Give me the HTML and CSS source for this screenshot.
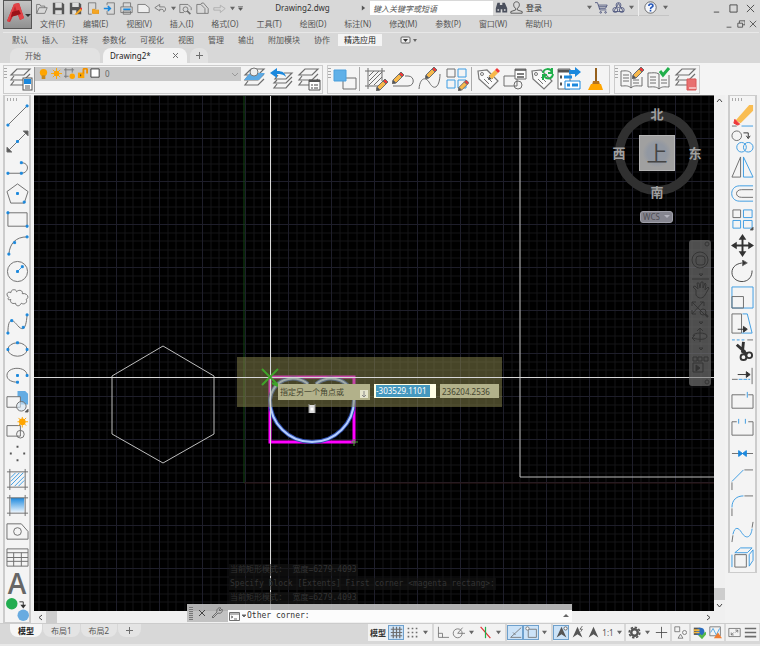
FILE: index.html
```html
<!DOCTYPE html>
<html lang="zh-CN">
<head>
    <meta charset="UTF-8">
    <meta name="viewport" content="width=device-width, initial-scale=1.0">
    <title>Drawing2.dwg</title>
    <link rel="stylesheet" href="styles.css">
</head>
<body>
    <!-- Shared icon parts -->
    <svg class="defs" width="0" height="0">
        <symbol id="caret" viewBox="0 0 6 6"><path d="M0 1h6L3 5z" fill="#666"/></symbol>
        <symbol id="layers" viewBox="0 0 24 24"><path d="M8 2h13l-6 6H2zM5 9l-3 4h13l6-6M5 14l-3 4h13l6-6" fill="none" stroke="#6e6e6e" stroke-width="1.2"/></symbol>
        <symbol id="pencil" viewBox="0 0 12 12"><path d="M0 12l1-4 3 3z" fill="#555"/><path d="M1 8l6-6 3 3-6 6z" fill="#f7b84b"/><path d="M7 2l2-2 3 3-2 2z" fill="#f03838"/></symbol>
        <symbol id="tag" viewBox="0 0 24 24"><path d="M2 4l9-1 11 11-8 8L3 12z" fill="#fafafa" stroke="#777" stroke-width="1.2"/><circle cx="6" cy="7" r="1.5" fill="none" stroke="#777"/><path d="M8 12l5 5M11 10l5 5M13 8l4 4" stroke="#777"/></symbol>
        <symbol id="compass" viewBox="0 0 16 16"><path d="M8 1l6 13-6-4-6 4z" fill="#555"/></symbol>
    </svg>

    <header class="top">
        <button class="app-button" aria-label="应用程序菜单">
            <svg width="28" height="28" viewBox="0 0 28 28"><path d="M3 20L10 3l5-1 5 15-4 2-2-5-5 1-3 6z" fill="#c8262c"/><path d="M10 3l5-1 5 15-4 2-5-14-6 16-2-1z" fill="#e14347"/><path d="M8 11l7-2 2 4-10 3z" fill="#9c1319"/><path d="M21 13h6l-3 3z" fill="#333"/></svg>
        </button>
        <div class="top-rows">
            <div class="title-bar">
                <div class="quick">
                    <button aria-label="打开"><svg viewBox="0 0 16 16" class="i"><path d="M2 14V3h4l1 2h5v2M2 14l3-7h10l-3 7z"/></svg></button>
                    <button aria-label="保存"><svg viewBox="0 0 16 16"><path d="M1 1h12l2 2v12H1z" fill="#555"/><path d="M4 1h8v6H4zM4 10h8v5H4z" fill="#ddd"/></svg></button>
                    <button aria-label="另存为"><svg viewBox="0 0 16 16"><path d="M1 1h12l2 2v12H1z" fill="#555"/><path d="M4 1h8v5H4zM4 10h5v5H4z" fill="#ddd"/><path d="M7 15l7-7 2 2-7 6z" fill="#f5a623"/><path d="M13 7l3 3V7z" fill="#e33"/></svg></button>
                    <button aria-label="从移动设备打开"><svg viewBox="0 0 16 16" class="i"><path d="M3 15V1h9v8M3 15h4"/><path d="M8 14V9h3l1 1h4v4z" fill="#f5a623" stroke="#e69512"/></svg></button>
                    <button aria-label="保存到移动设备"><svg viewBox="0 0 16 16" class="i"><path d="M5 4V1h9v14H5v-4"/><path d="M1 8h7M6 5l3 3-3 3" stroke="#1b88dd" stroke-width="2"/></svg></button>
                    <button aria-label="打印"><svg viewBox="0 0 16 16" class="i"><path d="M4 6V1h9v5M1 6h14v7H1zM4 11h9v4H4z"/><path d="M4 9h9" stroke="#1b88dd" stroke-width="2"/></svg></button>
                    <button aria-label="新建"><svg viewBox="0 0 16 16" class="i"><path d="M1 3h9l5 4v6H1z" fill="#eee"/></svg></button>
                    <button aria-label="放弃"><svg viewBox="0 0 16 16" class="i"><path d="M1 7l6-4v3h5c3 0 3 5 0 6 0-3-1-3-5-3v2z"/></svg></button>
                    <button class="slim" aria-label="放弃列表"><svg viewBox="0 0 6 6"><use href="#caret"/></svg></button>
                    <button aria-label="打印预览"><svg viewBox="0 0 16 16" class="i"><path d="M6 13H1V3h10l4 4v3"/><circle cx="8" cy="9" r="3"/><path d="M10 11l4 4" stroke-width="2"/></svg></button>
                    <button aria-label="发布"><svg viewBox="0 0 16 16" class="i"><path d="M1 14V3h5l5 5v6zM6 2l3-1 6 7v6h-4"/></svg></button>
                    <button aria-label="重做"><svg viewBox="0 0 16 16" class="i faint"><path d="M15 8L9 4v3H1v3h8v3z"/></svg></button>
                    <button class="slim" aria-label="重做列表"><svg viewBox="0 0 6 6"><use href="#caret"/></svg></button>
                    <button class="slim" aria-label="自定义"><svg viewBox="0 0 8 8"><path d="M0 1h8M1 3h6L4 7z" fill="#555" stroke="#555"/></svg></button>
                </div>
                <h1 class="doc-title">Drawing2.dwg</h1>
                <div class="search">
                    <svg class="car" viewBox="0 0 6 6"><path d="M1 0l4 3-4 3z" fill="#555"/></svg>
                    <input type="search" aria-label="搜索" placeholder="键入关键字或短语">
                </div>
                <div class="account">
                    <button aria-label="搜索"><svg viewBox="0 0 16 16" fill="#4a4f5c"><path d="M3 2h3v3h3V2h3l3 7v5H9v-4H7v4H1V9z"/><path d="M3 10h2v2H3zM11 10h2v2h-2z" fill="#ddd"/></svg></button>
                    <button class="sign-in"><svg viewBox="0 0 16 16" class="i w"><path d="M8 1c5 0 4 7 1 8v2l6 2v2H1v-2l6-2V9C4 8 3 1 8 1z"/></svg>登录</button>
                    <button class="slim" aria-label="帐户"><svg viewBox="0 0 6 6"><use href="#caret"/></svg></button>
                    <button aria-label="商店"><svg viewBox="0 0 16 16" class="i navy"><path d="M0 2h3l3 9h8M4 5h11l-2 4H5M5 7h9"/><circle cx="7" cy="14" r="1"/><circle cx="13" cy="14" r="1"/></svg></button>
                    <button aria-label="应用"><svg viewBox="0 0 16 16" class="i navy"><circle cx="8" cy="5" r="3"/><circle cx="4" cy="11" r="3"/><circle cx="12" cy="11" r="3"/><path d="M8 3L2 13h12z"/></svg></button>
                    <button class="slim" aria-label="应用列表"><svg viewBox="0 0 6 6"><use href="#caret"/></svg></button>
                    <button class="help" aria-label="帮助"><svg viewBox="0 0 16 16"><circle cx="8" cy="8" r="7" fill="#f4f6fb" stroke="#555"/><path d="M6 6c0-3 5-3 5 0 0 2-3 1-3 4M8 11v2" fill="none" stroke="#2456b8" stroke-width="2"/></svg></button>
                    <button class="slim" aria-label="帮助列表"><svg viewBox="0 0 6 6"><use href="#caret"/></svg></button>
                </div>
                <div class="window-buttons">
                    <button aria-label="最小化"><svg viewBox="0 0 10 10" class="i w"><path d="M2 9h6"/></svg></button>
                    <button aria-label="最大化"><svg viewBox="0 0 10 10" class="i w"><path d="M1 1h8v8H1z"/></svg></button>
                    <button aria-label="关闭"><svg viewBox="0 0 10 10" class="i w"><path d="M1 1l8 8M9 1L1 9"/></svg></button>
                </div>
            </div>
            <div class="menu-row">
                <nav class="menus">
                    <button>文件(F)</button><button>编辑(E)</button><button>视图(V)</button><button>插入(I)</button><button>格式(O)</button><button>工具(T)</button><button>绘图(D)</button><button>标注(N)</button><button>修改(M)</button><button>参数(P)</button><button>窗口(W)</button><button>帮助(H)</button>
                </nav>
                <div class="doc-buttons">
                    <button aria-label="最小化图形"><svg viewBox="0 0 10 10" class="i w"><path d="M2 9h6"/></svg></button>
                    <button aria-label="还原图形"><svg viewBox="0 0 10 10" class="i w"><path d="M3 4V1h7v5H7M1 4h6v5H1z"/></svg></button>
                    <button aria-label="关闭图形"><svg viewBox="0 0 10 10" class="i w"><path d="M1 1l8 8M9 1L1 9"/></svg></button>
                </div>
            </div>
        </div>
    </header>

    <nav class="ribbon">
        <button>默认</button><button>插入</button><button>注释</button><button>参数化</button><button>可视化</button><button>视图</button><button>管理</button><button>输出</button><button>附加模块</button><button>协作</button><button class="active">精选应用</button>
        <button class="ribbon-more" aria-label="最小化功能区"><svg width="18" height="8" viewBox="0 0 18 8"><rect x="1" y="1" width="9" height="6" rx="1" fill="#eee" stroke="#666"/><path d="M3 3h5L5.500 6z" fill="#333"/><path d="M13 3h4l-2 3z" fill="#666"/></svg></button>
    </nav>

    <div class="doc-tabs">
        <button class="doc-tab start">开始</button>
        <button class="doc-tab active"><span>Drawing2*</span><svg width="7" height="7" viewBox="0 0 7 7" class="i"><path d="M1 1l5 5M6 1L1 6"/></svg></button>
        <button class="doc-tab new" aria-label="新图形"><svg width="7" height="7" viewBox="0 0 7 7" class="i"><path d="M0 3.500h7M3.500 0v7"/></svg></button>
    </div>

    <div class="toolbars">
        <div class="toolbar">
            <span class="grip"></span>
            <button aria-label="图层特性"><svg viewBox="0 0 24 24"><use href="#layers"/><rect x="14" y="11" width="9" height="12" fill="#fff" stroke="#555"/><path d="M15 12h7v5h-7z" fill="#1b88dd"/><path d="M16 19h5M16 21h5" stroke="#555"/></svg></button>
            <div class="layer-box">
                <div class="layer-combo">
                    <svg width="11" height="11" viewBox="0 0 12 12"><circle cx="6" cy="5" r="4" fill="#ffa500"/><path d="M4 8h4v4H4z" fill="#c98a1c"/></svg>
                    <svg width="11" height="11" viewBox="0 0 12 12"><circle cx="6" cy="6" r="3" fill="#ffa500"/><path d="M6 0v12M0 6h12M2 2l8 8M10 2l-8 8" stroke="#ffa500"/></svg>
                    <svg width="11" height="11" viewBox="0 0 12 12"><path d="M0 2h11M2 0v11M9 0v5M0 9h5" stroke="#777" fill="none"/><circle cx="9" cy="9" r="3" fill="#ffa500"/></svg>
                    <svg width="11" height="11" viewBox="0 0 12 12"><path d="M1 5h7v6H1z" fill="#ffa500"/><path d="M7 6V2c0-2 4-2 4 0v4" fill="none" stroke="#f09000" stroke-width="2"/><path d="M4 7v2" stroke="#333"/></svg>
                    <svg width="11" height="11" viewBox="0 0 12 12"><path d="M1 1h9v9H1z" fill="#fff" stroke="#333"/></svg>
                    <select aria-label="图层"><option>0</option></select>
                    <svg width="6" height="6" viewBox="0 0 6 6"><path d="M0 2l3 3 3-3" fill="none" stroke="#999"/></svg>
                </div>
            </div>
            <button aria-label="将对象的图层设为当前"><svg viewBox="0 0 24 24"><use href="#layers"/><path d="M7 6h15l-6 7H1z" fill="#5ba9e4"/><circle cx="11" cy="5" r="4" fill="#eee" stroke="#777"/></svg></button>
            <button aria-label="上一个图层"><svg viewBox="0 0 24 24"><path d="M14 6h8l-6 6H5l3-4M7 13l-3 3h12l6-6M7 17l-3 4h12l6-7" fill="none" stroke="#6e6e6e" stroke-width="1.200"/><path d="M0 6l7-5v3c6 0 8 2 9 6-3-3-5-3-9-3v4z" fill="#1b88dd"/></svg></button>
            <button aria-label="图层状态"><svg viewBox="0 0 24 24"><use href="#layers"/><path d="M12 13h11v10H12z" fill="#fff" stroke="#555"/><path d="M12 14h11" stroke="#555" stroke-width="2"/><path d="M14 18h2M17 18h4M14 21h2M17 21h4" stroke="#444"/></svg></button>
        </div>

        <div class="toolbar">
            <span class="grip"></span>
            <button aria-label="绘图次序"><svg viewBox="0 0 24 24" class="i"><path d="M10 11h13v11H10z"/><path d="M1 3h12v11H1z" fill="#5fb0e8" stroke="#4a9fdc"/></svg></button>
            <span class="sep"></span>
            <button aria-label="编辑图案填充"><svg viewBox="0 0 24 24" class="i"><path d="M1 4h20M4 1v21M1 19h13M18 1v13M5 9l5-5M5 14L15 4M5 18L18 5M10 18l8-8"/><use href="#pencil" x="12" y="12" width="12" height="12"/></svg></button>
            <button aria-label="编辑多段线"><svg viewBox="0 0 24 24" class="i"><path d="M2 19h15c7 0 7-10 0-10h-3"/><use href="#pencil" x="1" y="5" width="12" height="12"/></svg></button>
            <button aria-label="编辑样条曲线"><svg viewBox="0 0 24 24" class="i"><path d="M1 22C2 10 8 10 11 15c6 11 11 3 11-8"/><use href="#pencil" x="7" y="0" width="12" height="12"/></svg></button>
            <button aria-label="编辑阵列"><svg viewBox="0 0 24 24" class="i"><path d="M2 2h8v8H2z"/><path d="M13 2h8v8h-8zM2 13h8v8H2zM13 13h8v8h-8z" class="b"/><use href="#pencil" x="13" y="13" width="11" height="11"/></svg></button>
            <span class="sep"></span>
            <button aria-label="编辑属性"><svg viewBox="0 0 24 24"><use href="#tag"/><use href="#pencil" x="12" y="1" width="12" height="12"/></svg></button>
            <button aria-label="块属性"><svg viewBox="0 0 24 24" class="i"><path d="M1 9h13v10H1z"/><circle cx="15" cy="18" r="4"/><path d="M12 2h11v10H12z" fill="#fff"/><path d="M12 3h11M14 7h7M14 10h7" stroke="#555" stroke-width="1.500"/></svg></button>
            <button aria-label="同步属性"><svg viewBox="0 0 24 24"><use href="#tag"/><path d="M13 6c1-5 7-5 9-1M23 7c-1 6-7 5-9 2M22 1v5h-4M13 13V8h4" fill="none" stroke="#20af4b" stroke-width="2"/></svg></button>
            <button aria-label="提取数据"><svg viewBox="0 0 24 24" class="i"><path d="M1 2h12v20H1z" fill="#fff"/><path d="M1 4h12M3 10h2M3 17h2" stroke="#555" stroke-width="3"/><path d="M7 10h8" stroke="#1b88dd" stroke-width="3"/><path d="M12 3h6V0l6 5-6 5V7h-6z" fill="#1b88dd" stroke="none"/><path d="M8 14h15v8H8z" fill="#fff" stroke="#1b88dd"/><path d="M10 18h3M15 18h6" stroke="#1b88dd" stroke-width="3"/></svg></button>
            <button aria-label="清理"><svg viewBox="0 0 24 24"><path d="M12 1v14" stroke="#96601c" stroke-width="2"/><path d="M9 14h6l1 4H8z" fill="#b5721c"/><path d="M7 17h10l2 6H4z" fill="#ffa500"/></svg></button>
        </div>

        <div class="toolbar">
            <span class="grip"></span>
            <button aria-label="编辑参照"><svg viewBox="0 0 24 24" class="i"><path d="M11 6C8 3 5 4 1 4v15c4 0 7-1 10 2 3-3 6-2 11-2v-9M11 6v15M3 8h6M3 11h6M3 14h6M13 13h6M13 16h6"/><use href="#pencil" x="12" y="0" width="12" height="12"/></svg></button>
            <button aria-label="保存参照"><svg viewBox="0 0 24 24" class="i"><path d="M12 7C9 5 6 6 1 6v14c4 0 8-1 11 2 3-3 6-2 10-2V8M12 7v15M3 10h6M3 13h6M3 16h6M14 13h6M14 16h6"/><path d="M13 4l3 4 6-7" stroke="#20af4b" stroke-width="3"/></svg></button>
            <button aria-label="参照图层"><svg viewBox="0 0 24 24"><use href="#layers"/><path d="M13 12h9v11h-9z" fill="#e87070" stroke="#d85656"/><path d="M15 21h7" stroke="#fff"/></svg></button>
        </div>
    </div>

    <main class="workspace">
        <div class="side draw">
            <span class="grip"></span>
            <button aria-label="直线"><svg viewBox="0 0 24 24" class="i"><path d="M2 22L22 2"/><path d="M1 21h2v2H1zM21 1h2v2h-2z" class="dot"/></svg></button>
            <button aria-label="构造线"><svg viewBox="0 0 24 24" class="i"><path d="M3 21L21 3"/><path d="M23 1v5l-5-5zM1 23v-5l5 5z" fill="#555"/><path d="M11 11h2v2h-2z" class="dot"/></svg></button>
            <button aria-label="多段线"><svg viewBox="0 0 24 24" class="i"><path d="M2 18h14c8 0 9-11 0-11"/><path d="M1 17h2v2H1zM15 17h2v2h-2zM15 6h2v2h-2z" class="dot"/></svg></button>
            <button aria-label="多边形"><svg viewBox="0 0 24 24" class="i"><path d="M12 2l11 8-4 12H5L1 10z"/><path d="M11 11h2v2h-2zM18 20h2v2h-2z" class="dot"/></svg></button>
            <button aria-label="矩形"><svg viewBox="0 0 24 24" class="i"><path d="M2 5h20v14H2z"/><path d="M1 4h2v2H1zM21 18h2v2h-2z" class="dot"/></svg></button>
            <button aria-label="圆弧"><svg viewBox="0 0 24 24" class="i"><path d="M3 21C4 10 10 3 22 3"/><path d="M2 20h2v2H2zM8 8h2v2H8zM21 2h2v2h-2z" class="dot"/></svg></button>
            <button aria-label="圆"><svg viewBox="0 0 24 24" class="i"><circle cx="12" cy="12" r="10.500"/><path d="M12 12l5-5" class="b"/><path d="M11 11h2v2h-2zM16 6h2v2h-2z" class="dot"/></svg></button>
            <button aria-label="修订云线"><svg viewBox="0 0 24 24" class="i"><path d="M3 12c-4-3-1-7 2-5 0-4 6-4 6-1 3-3 7-1 6 2 5-1 8 4 4 6 2 3-2 6-5 4-2 4-6 3-6 0-4 1-6-1-5-4-2 1-4 0-2-2z"/></svg></button>
            <button aria-label="样条曲线"><svg viewBox="0 0 24 24" class="i"><path d="M2 22C2 3 8 9 12 14c6 7 9 3 10-11"/><path d="M1 21h2v2H1zM5 8h2v2H5zM17 15h2v2h-2zM21 2h2v2h-2z" class="dot"/></svg></button>
            <button aria-label="椭圆"><svg viewBox="0 0 24 24" class="i"><ellipse cx="12" cy="12" rx="10" ry="7"/><path d="M1 11h2v2H1zM11 4h2v2h-2zM21 11h2v2h-2z" class="dot"/></svg></button>
            <button aria-label="椭圆弧"><svg viewBox="0 0 24 24" class="i"><path d="M22 12C22 2 1 2 1 12c0 5 6 7 11 7"/><path d="M11 11h2v2h-2zM21 11h2v2h-2zM11 18h2v2h-2z" class="dot"/></svg></button>
            <button aria-label="插入块"><svg viewBox="0 0 24 24" class="i"><path d="M12 1h8l3 3v11H12z" fill="#63ace3" stroke="none"/><path d="M1 7h14v11H1z" fill="#f4f4f4"/><circle cx="16" cy="17" r="5" fill="#d5e6f3" fill-opacity=".6"/><path d="M23 20v3h-3z" fill="#333"/></svg></button>
            <button aria-label="创建块"><svg viewBox="0 0 24 24" class="i"><path d="M1 10h14v11H1z"/><circle cx="15" cy="19" r="4"/><path d="M17 1v11M12 6h11M13 2l8 8M21 2l-8 8" stroke="#ffa500"/><circle cx="17" cy="6" r="3.500" fill="#ffa500" stroke="none"/></svg></button>
            <button aria-label="点"><svg viewBox="0 0 24 24" fill="#555"><path d="M11 4h2v2h-2zM4 11h2v2H4zM18 11h2v2h-2zM11 18h2v2h-2z"/></svg></button>
            <button aria-label="图案填充"><svg viewBox="0 0 24 24" class="i"><path d="M5 10l5-5M5 14l9-9M5 18L18 5M9 19L19 9M13 19l6-6" class="b"/><path d="M1 4h22M1 20h22M4 1v22M20 1v22"/></svg></button>
            <button aria-label="渐变色"><svg viewBox="0 0 24 24" class="i"><linearGradient id="fade" x2="0" y2="1"><stop offset="0" stop-color="#1b88dd"/><stop offset="1" stop-color="#f6faff"/></linearGradient><path d="M5 4h14v16H5z" fill="url(#fade)" stroke="none"/><path d="M1 4h22M1 20h22M4 1v22M20 1v22"/></svg></button>
            <button aria-label="面域"><svg viewBox="0 0 24 24" class="i"><path d="M1 4h15l7 8v8H1z"/><circle cx="12" cy="12" r="4"/></svg></button>
            <button aria-label="表格"><svg viewBox="0 0 24 24" class="i"><path d="M1 3h22v18H1zM1 7h22M1 12h22M1 16h22M8 7v14M16 7v14"/></svg></button>
            <button aria-label="多行文字" class="text-tool">A</button>
            <button aria-label="添加选定对象"><svg viewBox="0 0 24 24"><circle cx="6" cy="6" r="6" fill="#22ad50"/><circle cx="18" cy="18" r="6" fill="#68abe0"/><path d="M14 4h4v5" fill="none" stroke="#333"/><path d="M15 7h6l-3 4z" fill="#333"/></svg></button>
        </div>

        <section class="view">
            <div class="canvas">
                <svg class="drawing" width="100%" height="100%">
                    <defs>
                        <pattern id="grid" x="39" y="42" width="43" height="43" patternUnits="userSpaceOnUse">
                            <path d="M9 0v43M17 0v43M26 0v43M34 0v43M0 9h43M0 17h43M0 26h43M0 34h43" stroke="#131316"/>
                            <path d="M0 0v43M0 0h43" stroke="#1e1e2a" stroke-width="2"/>
                        </pattern>
                    </defs>
                    <rect width="100%" height="100%" fill="url(#grid)"/>
                    <path d="M210 0v387" stroke="#124812"/>
                    <path d="M210 387H3000" stroke="#301818"/>
                    <path d="M486 0v381H3000" class="entity"/>
                    <path d="M129 250l51 30v58l-51 29-51-29v-58z" class="entity"/>
                    <path d="M236 281h84v65h-84z" class="magenta"/>
                    <path d="M274 288A23 23 0 0 0 236 304A42 42 0 0 0 320 304A23 23 0 0 0 282 288" class="glow"/>
                    <path d="M274 288A23 23 0 0 0 236 304A42 42 0 0 0 320 304A23 23 0 0 0 282 288" class="curve"/>
                    <rect x="203" y="261" width="265" height="50" class="hint"/>
                    <path d="M236 0v3000M0 281h3000" class="cross"/>
                    <path d="M228 273l16 16M244 273l-16 16M238 287l6 3" class="snap thick"/>
                    <path d="M317 346h7M320 343v7" class="snap"/>
                    <path d="M275 309h6v8h-6z" fill="#ddd"/><path d="M278 301v3M275 308v9M281 308v9" stroke="#999"/><circle cx="278" cy="313" r="1.500" fill="#fff"/>
                </svg>

                <div class="dyn">
                    <label class="dyn-prompt" for="dyn-x"><span>指定另一个角点或</span><svg width="8" height="8" viewBox="0 0 8 8"><path d="M0 0h8v8H0z" fill="#e5e5ce"/><path d="M4 1v5M2 5l2 2 2-2" stroke="#888" fill="none"/></svg></label>
                    <div class="dyn-x"><input id="dyn-x" type="text" value="-303529.1101"></div>
                    <input class="dyn-y" type="text" aria-label="Y" value="236204.2536">
                </div>

                <div class="viewcube">
                    <button class="n">北</button>
                    <button class="w">西</button>
                    <button class="face">上</button>
                    <button class="e">东</button>
                    <button class="s">南</button>
                </div>
                <button class="wcs">WCS<svg width="6" height="6" viewBox="0 0 6 6"><path d="M0 1h6L3 4z" fill="#b4b4be"/></svg></button>

                <div class="navbar">
                    <svg width="22" height="146" viewBox="0 0 22 146" class="i"><circle cx="18" cy="4" r="2"/><circle cx="11" cy="20" r="8"/><rect x="7" y="16" width="9" height="9" rx="3"/><path d="M10 34h4l-2 2zM3 39h17M7 50l-3-3 2-1 3 3-1-6 2 0 1 5 1-6h2v6l2-5 1 1-1 6 3-3 1 1-4 7c-2 4-7 4-9 0zM3 62l12 12M14 62L3 74M3 66v-4h4M11 62h4v4M3 70v4h4"/><circle cx="14" cy="72" r="3"/><path d="M16 74l3 3" stroke-width="2"/><path d="M10 82h4l-2 2zM11 88v14M8 91l3-3 3 3M4 96c0-4 14-4 14 0s-8 4-14 2M6 95l-3 3 3 3M10 108h4l-2 2zM4 117h4v4H4zM9 117h4v4H9zM15 117h4v4h-4zM4 123h10v9H4z"/><path d="M7 125l4 3-4 3z" fill="#333"/><circle cx="18" cy="142" r="2"/></svg>
                </div>

                <div class="history">
                    <p>当前矩形模式:  宽度=6279.4093</p>
                    <p>Specify block [Extents] First corner &lt;magenta rectang&gt;:</p>
                    <p>当前矩形模式:  宽度=6279.4093</p>
                </div>
            </div>
            <div class="vscroll">
                <button aria-label="向上"><svg width="7" height="7" viewBox="0 0 7 7" class="i w"><path d="M1 5l2.500-3L6 5"/></svg></button>
                <span class="thumb"></span>
                <button aria-label="向下"><svg width="7" height="7" viewBox="0 0 7 7" class="i w"><path d="M1 2l2.500 3L6 2"/></svg></button>
            </div>
            <div class="hscroll">
                <button aria-label="向左"><svg width="7" height="7" viewBox="0 0 7 7" class="i w"><path d="M5 1L2 3.500 5 6"/></svg></button>
                <span class="thumb"></span>
                <button aria-label="向右"><svg width="7" height="7" viewBox="0 0 7 7" class="i w"><path d="M2 1l3 2.500L2 6"/></svg></button>
            </div>

            <div class="command">
                <span class="command-grip"></span>
                <button aria-label="关闭命令行"><svg width="8" height="8" viewBox="0 0 8 8" class="i w"><path d="M1 1l6 6M7 1L1 7"/></svg></button>
                <button aria-label="自定义"><svg width="12" height="12" viewBox="0 0 12 12" class="i"><path d="M1 10l5-5c-1-3 2-5 4-4L8 3l1 1 2-2c1 3-1 5-4 4l-5 5z"/></svg></button>
                <div class="command-line">
                    <svg width="18" height="9" viewBox="0 0 18 9" class="i"><path d="M0.500 0.500h10v8h-10zM0 2h11M2 4l2 1-2 1M5 7h3"/><path d="M13 3h4l-2 2z" fill="#555"/></svg>
                    <input type="text" aria-label="命令" value="Other corner:">
                    <svg width="6" height="6" viewBox="0 0 6 6"><path d="M0 4h6L3 1z" fill="#666"/></svg>
                </div>
            </div>
        </section>

        <div class="side modify">
            <span class="grip"></span>
            <button aria-label="删除"><svg viewBox="0 0 24 24" class="i"><path d="M5 17L19 1h4v6L10 20z" fill="#f9bd52" stroke="none"/><path d="M4 16l5 5-2 1-4-2z" fill="#ee3838" stroke="#ee3838"/><path d="M1 23h5"/><path d="M11 23h12" class="b"/></svg></button>
            <button aria-label="复制"><svg viewBox="0 0 24 24" class="i"><circle cx="6" cy="6" r="5"/><path d="M13 3h5v5M16 6l2 3 2-3" stroke="#333"/><circle cx="11" cy="18" r="5" class="b"/><circle cx="18" cy="18" r="5" class="b"/></svg></button>
            <button aria-label="镜像"><svg viewBox="0 0 24 24" class="i"><path d="M10 1v21H1z"/><path d="M13 1v21h10z" class="b"/></svg></button>
            <button aria-label="偏移"><svg viewBox="0 0 24 24" class="i"><path d="M23 4H9C-2 4-2 20 9 20h14" class="b"/><path d="M23 8H11c-7 0-7 8 0 8h12"/></svg></button>
            <button aria-label="阵列"><svg viewBox="0 0 24 24" class="i"><path d="M2 2h8v8H2z"/><path d="M13 2h9v8h-9zM2 13h8v8H2zM13 13h9v8h-9z" class="b"/><path d="M23 20v3h-3z" fill="#222"/></svg></button>
            <button aria-label="移动"><svg viewBox="0 0 24 24"><path d="M12 2v20M2 12h20" stroke="#333" stroke-width="2"/><path d="M12 0l4 6H8zM12 24l4-6H8zM0 12l6-4v8zM24 12l-6-4v8z" fill="#333"/></svg></button>
            <button aria-label="旋转"><svg viewBox="0 0 24 24" class="i"><path d="M22 11c0 16-21 14-21 2C1 7 6 3 14 3" stroke="#444"/><path d="M12 0l5 3-5 3z" fill="#333"/></svg></button>
            <button aria-label="缩放"><svg viewBox="0 0 24 24" class="i"><path d="M1 1h22v22H1z" class="b"/><path d="M1 11h12v12H1z"/></svg></button>
            <button aria-label="拉伸"><svg viewBox="0 0 24 24" class="i"><path d="M1 2h10v20H1z"/><path d="M12 2h5l5 20H11" class="b"/><path d="M7 18h8M13 15l4 3-4 3z" stroke="#333" fill="#333"/></svg></button>
            <button aria-label="修剪"><svg viewBox="0 0 24 24" class="i"><path d="M1 2h14" class="b" stroke-dasharray="3 2"/><path d="M17 2h6"/><path d="M13 4l-1 10 5 3M6 7l9 8" stroke="#333" stroke-width="3"/><circle cx="13" cy="20" r="3" stroke="#333" stroke-width="2"/><circle cx="19" cy="18" r="3" stroke="#333" stroke-width="2"/></svg></button>
            <button aria-label="延伸"><svg viewBox="0 0 24 24" class="i"><path d="M22 4v17M1 16h6"/><path d="M8 16h12" class="b" stroke-dasharray="4 1"/><path d="M7 11h12M16 8l4 3-4 3z" fill="#333" stroke="#333"/></svg></button>
            <button aria-label="打断于点"><svg viewBox="0 0 24 24" class="i"><path d="M15 5H1v14h22V5h-5"/><path d="M17 2v6" class="b"/></svg></button>
            <button aria-label="打断"><svg viewBox="0 0 24 24" class="i"><path d="M6 6H1v14h22V6h-5"/><path d="M8 3v5M15 3v5" class="b"/></svg></button>
            <button aria-label="合并"><svg viewBox="0 0 24 24" class="i"><path d="M1 12h22"/><path d="M8 9l4 3-4 3zM16 9l-4 3 4 3z" fill="#1b88dd" stroke="#1b88dd"/></svg></button>
            <button aria-label="倒角"><svg viewBox="0 0 24 24" class="i"><path d="M1 23v-8M14 2h9"/><path d="M1 14L13 2" class="b"/></svg></button>
            <button aria-label="圆角"><svg viewBox="0 0 24 24" class="i"><path d="M1 23v-8M14 2h9"/><path d="M1 14C1 6 6 2 13 2" class="b"/></svg></button>
            <button aria-label="光顺曲线"><svg viewBox="0 0 24 24" class="i"><path d="M1 23l1-7M22 8l1-6"/><path d="M2 15c2-9 6-7 9-2 5 8 10 5 11-4" class="b"/></svg></button>
            <button aria-label="分解"><svg viewBox="0 0 24 24" class="i"><path d="M4 9h12v13H4z"/><path d="M1 9v13M4 7l6-5h12l-5 5zM19 9l4-5v11l-4 6z" class="b"/></svg></button>
        </div>
    </main>

    <footer class="status">
        <div class="layouts">
            <button class="active">模型</button><button>布局1</button><button>布局2</button><button aria-label="新布局"><svg width="7" height="7" viewBox="0 0 7 7" class="i"><path d="M0 3.500h7M3.500 0v7"/></svg></button>
        </div>
        <div class="status-tools">
            <div class="group">
                <button class="model">模型</button>
                <button class="on" aria-label="栅格"><svg viewBox="0 0 16 16" class="i"><path d="M1 4h14M1 8h14M1 12h14M4 1v14M8 1v14M12 1v14" stroke-width="1.500"/></svg></button>
                <button aria-label="捕捉"><svg viewBox="0 0 16 16" class="i"><path d="M2 3h12M2 8h12M2 13h12" stroke-width="2" stroke-dasharray="2 3"/></svg></button>
                <button class="slim" aria-label="捕捉列表"><svg viewBox="0 0 6 6"><use href="#caret"/></svg></button>
            </div>
            <div class="group">
                <button aria-label="正交"><svg viewBox="0 0 16 16" class="i"><path d="M3 1v13h13M3 9h5v5"/></svg></button>
                <button aria-label="极轴"><svg viewBox="0 0 16 16" class="i"><circle cx="7" cy="9" r="5.500"/><path d="M7 9h9M7 9l6-7"/></svg></button>
                <button class="slim" aria-label="极轴列表"><svg viewBox="0 0 6 6"><use href="#caret"/></svg></button>
                <button aria-label="等轴测"><svg viewBox="0 0 16 16" class="i"><path d="M2 1l12 14" stroke="#d33" stroke-width="1.500"/><path d="M8 1v14" stroke="#20af4b" stroke-width="1.500"/></svg></button>
                <button class="slim" aria-label="等轴测列表"><svg viewBox="0 0 6 6"><use href="#caret"/></svg></button>
            </div>
            <div class="group">
                <button class="on" aria-label="对象捕捉追踪"><svg viewBox="0 0 16 16" class="i"><path d="M15 2L2 14h13M5 8l3 3"/></svg></button>
                <button class="on" aria-label="对象捕捉"><svg viewBox="0 0 16 16" class="i"><path d="M4 4h10v10H4z"/><circle cx="3" cy="3" r="2" fill="#fff"/></svg></button>
                <button class="slim" aria-label="对象捕捉列表"><svg viewBox="0 0 6 6"><use href="#caret"/></svg></button>
            </div>
            <div class="group">
                <button class="on" aria-label="注释可见性"><svg viewBox="0 0 16 16"><use href="#compass"/><circle cx="13" cy="3" r="2" fill="#fff" stroke="#555"/></svg></button>
                <button aria-label="自动缩放"><svg viewBox="0 0 16 16"><use href="#compass"/><path d="M14 0l-3 4h3l-2 3" fill="none" stroke="#555"/></svg></button>
                <button aria-label="注释比例"><svg viewBox="0 0 16 16"><use href="#compass"/></svg></button>
                <button class="scale">1:1<svg width="6" height="6" viewBox="0 0 6 6"><use href="#caret"/></svg></button>
            </div>
            <div class="group">
                <button aria-label="工作空间"><svg viewBox="0 0 16 16" class="i"><circle cx="8" cy="8" r="4" stroke-width="3" stroke="#555"/><circle cx="8" cy="8" r="6.500" stroke="#555" stroke-width="2" stroke-dasharray="3 2"/></svg></button>
                <button class="slim" aria-label="工作空间列表"><svg viewBox="0 0 6 6"><use href="#caret"/></svg></button>
                <button aria-label="注释监视器"><svg viewBox="0 0 16 16" class="i w"><path d="M8 1v14M1 8h14"/></svg></button>
            </div>
            <div class="group">
                <button aria-label="隔离对象"><svg viewBox="0 0 16 16" class="i"><path d="M1 1h6v6H1zM5 15l3-5 3 5z"/><circle cx="13" cy="8" r="2.500"/></svg></button>
            </div>
            <div class="group">
                <button aria-label="硬件加速"><svg viewBox="0 0 16 16"><path d="M1 2h8v9H1z" fill="#555"/><circle cx="9" cy="7" r="5" fill="#2a6dc0"/><path d="M1 5h7M1 8h7" stroke="#f6b73c" stroke-width="2"/><path d="M8 11l3 3 5-6" stroke="#54b848" stroke-width="3" fill="none"/></svg></button>
                <button aria-label="图形性能"><svg viewBox="0 0 16 16" class="i"><path d="M1 1h13v11H1z"/><path d="M2 8l3-5 4 8 4-8" class="b"/><path d="M11 8l5 7H6z" fill="#ef7d31" stroke="none"/></svg></button>
            </div>
            <div class="group">
                <button aria-label="全屏显示"><svg viewBox="0 0 16 16" class="i"><path d="M1 3h14v10H1zM9 8l3-3M12 8V5H9M4 8v3h3M4 11l3-3"/></svg></button>
                <button aria-label="自定义"><svg viewBox="0 0 16 16" class="i"><path d="M1 3h14M1 8h14M1 13h14" stroke-width="2"/></svg></button>
            </div>
        </div>
    </footer>
</body>
</html>
```
FILE: styles.css
```css
*, *::before {
    box-sizing: border-box;
}

body {
    margin: 0;
    height: 100vh;
    min-height: 646px;
    display: flex;
    flex-direction: column;
    background-color: #d8d8d8;
    color: #555;
    font-family: "Noto Sans", "Noto Sans CJK SC", sans-serif;
    font-size: 8px;
    line-height: 12px;
    overflow: hidden;
}

button, input, select {
    font: inherit;
    color: inherit;
    background: none;
    border: none;
    padding: 0;
    margin: 0;
    outline: none;
}

button {
    display: flex;
    align-items: center;
    justify-content: center;
    white-space: nowrap;
    flex-shrink: 0;
}

svg {
    display: block;
    flex-shrink: 0;
}

.defs {
    position: absolute;
}

/* Line icons */
.i {
    fill: none;
    stroke: #6e6e6e;
}

.i.w {
    stroke: #444;
}

.i.navy {
    stroke: #444c78;
}

.i.faint {
    stroke: #aaa;
}

.i .b {
    stroke: #3d9ce2;
}

.dot {
    fill: #1b88dd;
    stroke: #1b88dd;
    stroke-width: 1px;
}

/* Title and menus */
.top {
    display: flex;
    height: 32px;
    padding-left: 3px;
}

.app-button {
    width: 29px;
    height: 29px;
    border: 1px solid #555;
    background: linear-gradient(#c4c4c4, #909090);
}

.top-rows {
    flex: 1;
    min-width: 0;
}

.title-bar, .menu-row {
    display: flex;
    align-items: center;
    height: 16px;
}

.quick, .account, .window-buttons, .doc-buttons {
    display: flex;
    align-items: center;
}

.quick {
    padding-left: 1px;
}

.quick button, .account button {
    width: 17px;
    height: 16px;
}

.quick svg, .account svg {
    width: 13px;
    height: 13px;
}

.quick .slim, .account .slim {
    width: 8px;
}

.quick .slim svg, .account .slim svg {
    width: 5px;
    height: 5px;
}

.doc-title {
    flex: 1;
    margin: 0;
    font-size: 8px;
    font-weight: normal;
    text-align: center;
    color: #333;
}

.search {
    display: flex;
    align-items: center;
    gap: 4px;
}

.search .car {
    width: 5px;
    height: 6px;
}

.search input {
    width: 123px;
    height: 14px;
    padding-left: 3px;
    background-color: #fff;
    font-style: italic;
}

.search input::placeholder {
    color: #555;
}

.account {
    width: 176px;
    height: 16px;
    border-bottom: 1px solid #c4c4c4;
}

.account .sign-in {
    width: auto;
    gap: 3px;
    margin-right: auto;
    color: #333;
}

.account .help {
    margin: 0 2px 0 3px;
    padding-left: 3px;
    width: 21px;
    border-left: 1px solid #eee;
}

.window-buttons {
    gap: 8px;
    padding: 0 5px 0 43px;
}

.window-buttons svg {
    width: 9px;
    height: 9px;
}

.menu-row {
    justify-content: space-between;
}

.menus {
    display: flex;
    gap: 18px;
    padding-left: 8px;
}

.doc-buttons {
    gap: 4px;
    padding-right: 3px;
}

.doc-buttons svg {
    width: 8px;
    height: 8px;
}

/* Ribbon */
.ribbon {
    display: flex;
    align-items: center;
    gap: 14px;
    height: 15px;
    margin: 0 1px 0 3px;
    padding-left: 9px;
    border-top: 1px solid #e8e8e8;
}

.ribbon .active {
    height: 12px;
    margin-left: -6px;
    padding: 0 6px;
    background-color: #f4f4f4;
    color: #222;
}

.ribbon-more {
    margin-left: 4px;
}

/* Drawing tabs */
.doc-tabs {
    display: flex;
    align-items: flex-end;
    height: 16px;
    margin-left: 3px;
    padding-left: 7px;
    gap: 3px;
}

.doc-tab {
    height: 15px;
    border-radius: 8px 8px 0 0;
    background-color: #e2e2e2;
}

.doc-tab.start {
    width: 90px;
    padding-left: 15px;
    justify-content: flex-start;
}

.doc-tab.active {
    width: 84px;
    padding: 0 8px 0 7px;
    justify-content: space-between;
    background-color: #f4f4f4;
    color: #222;
}

.doc-tab.new {
    width: 18px;
}

/* Toolbars */
.toolbars {
    display: flex;
    align-items: center;
    gap: 4px;
    height: 32px;
    padding-left: 3px;
    background-color: #f4f4f4;
}

.toolbar {
    display: flex;
    align-items: center;
    height: 29px;
    border: 1px solid #ccc;
}

.toolbar button {
    width: 27px;
    height: 26px;
}

.toolbar > button svg {
    width: 24px;
    height: 24px;
}

.grip {
    width: 3px;
    height: 10px;
    align-self: flex-start;
    margin-top: 2px;
    background: repeating-linear-gradient(#aaa 0 1px, #f4f4f4 1px 3px);
}

.sep {
    width: 1px;
    height: 24px;
    margin: 0 2px 0 1px;
    background-color: #aaa;
}

.layer-box {
    width: 207px;
    height: 25px;
    border-left: 1px solid #999;
}

.layer-combo {
    display: flex;
    align-items: center;
    gap: 2px;
    height: 14px;
    padding: 0 3px;
    background-color: #c8c8c8;
}

.layer-combo select {
    flex: 1;
    appearance: none;
    padding-left: 2px;
    color: #666;
}

/* Workspace */
.workspace {
    flex: 1;
    min-height: 0;
    display: flex;
    background-color: #f2f2f2;
}

.side {
    display: flex;
    flex-direction: column;
    width: 29px;
    border: 1px solid #ccc;
    border-width: 1px 2px;
    background-color: #f4f4f4;
}

.side .grip {
    width: 10px;
    height: 3px;
    margin: 2px 0 1px 2px;
    background: repeating-linear-gradient(90deg, #aaa 0 1px, #f4f4f4 1px 3px);
}

.side button {
    height: 26px;
}

.side svg {
    width: 23px;
    height: 23px;
}

.draw {
    width: 28px;
    margin: 0 3px;
}

.draw button {
    flex: 1;
    height: auto;
    min-height: 0;
}

.draw .text-tool {
    font-family: "Open Sans", sans-serif;
    font-size: 28px;
    font-weight: 600;
    line-height: 26px;
    color: #666;
}

.modify {
    align-self: flex-start;
    padding-bottom: 2px;
    margin: 0 3px;
}

.view {
    position: relative;
    flex: 1;
    min-width: 0;
    display: grid;
    grid-template-columns: 1fr 11px;
    grid-template-rows: 1fr 12px;
}

.canvas {
    position: relative;
    overflow: hidden;
    border-top: 1px solid #666;
    background-color: #000;
}

.drawing {
    position: absolute;
    inset: 0;
}

.entity {
    fill: none;
    stroke: #bdbdbd;
}

.magenta {
    fill: none;
    stroke: #f0f;
    stroke-width: 3px;
}

.glow {
    fill: none;
    stroke: #2f4fae;
    stroke-width: 4px;
}

.curve {
    fill: none;
    stroke: #b4cdff;
    stroke-width: 2px;
}

.hint {
    fill: #8d8950;
    fill-opacity: .5;
}

.cross {
    stroke: #d8d8d8;
    shape-rendering: crispEdges;
}

.snap {
    fill: none;
    stroke: #3fa329;
}

.snap.thick {
    stroke-width: 2px;
}

/* Dynamic input next to the cursor */
.dyn {
    position: absolute;
    left: 244px;
    top: 288px;
    display: flex;
    gap: 4px;
    color: #44442e;
}

.dyn-prompt, .dyn-x, .dyn-y {
    height: 14px;
    background-color: #b2b18a;
}

.dyn-prompt {
    display: flex;
    align-items: flex-end;
    justify-content: space-between;
    width: 92px;
    height: 16px;
    padding: 0 2px 2px;
}

.dyn-x {
    width: 62px;
    padding: 1px 2px;
    background-color: #fffee4;
}

.dyn-x input {
    display: block;
    width: 54px;
    height: 12px;
    background-color: #4598be;
    color: #fff;
}

.dyn-y {
    width: 59px;
    padding-left: 2px;
}

/* View cube */
.viewcube {
    position: absolute;
    top: 9px;
    right: 10px;
    display: grid;
    grid-template-columns: 18px 58px 18px;
    grid-template-rows: 18px 60px 18px;
    place-items: center;
    font-size: 13px;
    font-weight: bold;
    line-height: 16px;
    color: #a0a0a0;
}

.viewcube::before {
    content: "";
    grid-area: 1 / 1 / 4 / 4;
    width: 84px;
    height: 84px;
    border: 9px solid #303030;
    border-radius: 50%;
}

.viewcube .n {
    grid-area: 1 / 2;
}

.viewcube .w {
    grid-area: 2 / 1;
}

.viewcube .face {
    grid-area: 2 / 2;
    width: 36px;
    height: 36px;
    border: 1px solid #b5b5b5;
    background: radial-gradient(#9298a2 0 40%, #a0a0a0 60%);
    font-size: 21px;
    font-weight: normal;
    color: #444;
}

.viewcube .e {
    grid-area: 2 / 3;
}

.viewcube .s {
    grid-area: 3 / 2;
}

.wcs {
    position: absolute;
    top: 115px;
    right: 41px;
    width: 33px;
    height: 12px;
    gap: 4px;
    border: 1px solid #a0a0aa;
    border-radius: 3px;
    background-color: #85858f;
    color: #4e4e55;
}

.navbar {
    position: absolute;
    top: 144px;
    right: 3px;
    border-radius: 3px;
    background-color: rgba(120, 120, 120, .65);
}

.navbar svg {
    stroke: #353535;
}

.history {
    position: absolute;
    left: 195px;
    bottom: 7px;
    display: flex;
    flex-direction: column;
    align-items: flex-start;
    gap: 2px;
    font-family: "DejaVu Sans Mono", "Noto Sans CJK SC", monospace;
    color: #333;
}

.history p {
    margin: 0;
    padding: 0 1px;
    white-space: pre;
    background-color: rgba(22, 22, 22, .6);
}

/* Scroll bars */
.vscroll, .hscroll {
    display: flex;
    align-items: center;
    background-color: #f0f0f0;
}

.vscroll {
    flex-direction: column;
}

.hscroll {
    grid-column: 1 / 3;
    padding-right: 11px;
}

.vscroll button, .hscroll button {
    width: 12px;
    height: 11px;
}

.thumb {
    width: 11px;
    height: 12px;
    background-color: #cdcdcd;
}

.vscroll .thumb {
    margin-top: auto;
}

.hscroll .thumb {
    margin-right: auto;
}

/* Command line */
.command {
    position: absolute;
    left: 153px;
    bottom: 1px;
    display: flex;
    align-items: center;
    width: 385px;
    height: 18px;
    padding-left: 2px;
    gap: 5px;
    background-color: rgba(190, 190, 190, .93);
}

.command-grip {
    width: 4px;
    height: 13px;
    background: repeating-linear-gradient(#777 0 1px, #bbb 1px 2px);
}

.command-line {
    flex: 1;
    align-self: flex-end;
    display: flex;
    align-items: center;
    height: 12px;
    padding: 0 3px 0 1px;
    background-color: #fcfcfc;
}

.command-line input {
    flex: 1;
    min-width: 0;
    height: 12px;
    font-family: "DejaVu Sans Mono", monospace;
    color: #333;
}

/* Status bar */
.status {
    display: flex;
    justify-content: space-between;
    height: 23px;
    padding: 0 1px 3px 10px;
    border-bottom: 2px solid #e8e8e8;
    border-top: 1px solid #ccc;
}

.layouts {
    display: flex;
    gap: 1px;
}

.layouts button {
    height: 13px;
    padding: 0 8px;
    border-radius: 0 0 8px 8px;
    background-color: #e4e4e4;
}

.layouts .active {
    background-color: #f6f6f6;
    color: #222;
    font-weight: bold;
}

.status-tools {
    display: flex;
    align-items: center;
    gap: 2px;
}

.group {
    display: flex;
    align-items: center;
    height: 17px;
    padding-right: 1px;
    background-color: #f2f2f2;
}

.group button {
    width: 16px;
    height: 15px;
}

.group svg {
    width: 13px;
    height: 13px;
}

.group .slim {
    width: 11px;
}

.group .slim svg, .group .scale svg {
    width: 5px;
    height: 5px;
}

.group .model {
    width: 20px;
    color: #333;
    font-weight: bold;
}

.group .on {
    border: 1px solid #6ea0cc;
    background-color: #cce3f8;
}

.group .scale {
    width: 22px;
    gap: 3px;
}
```
